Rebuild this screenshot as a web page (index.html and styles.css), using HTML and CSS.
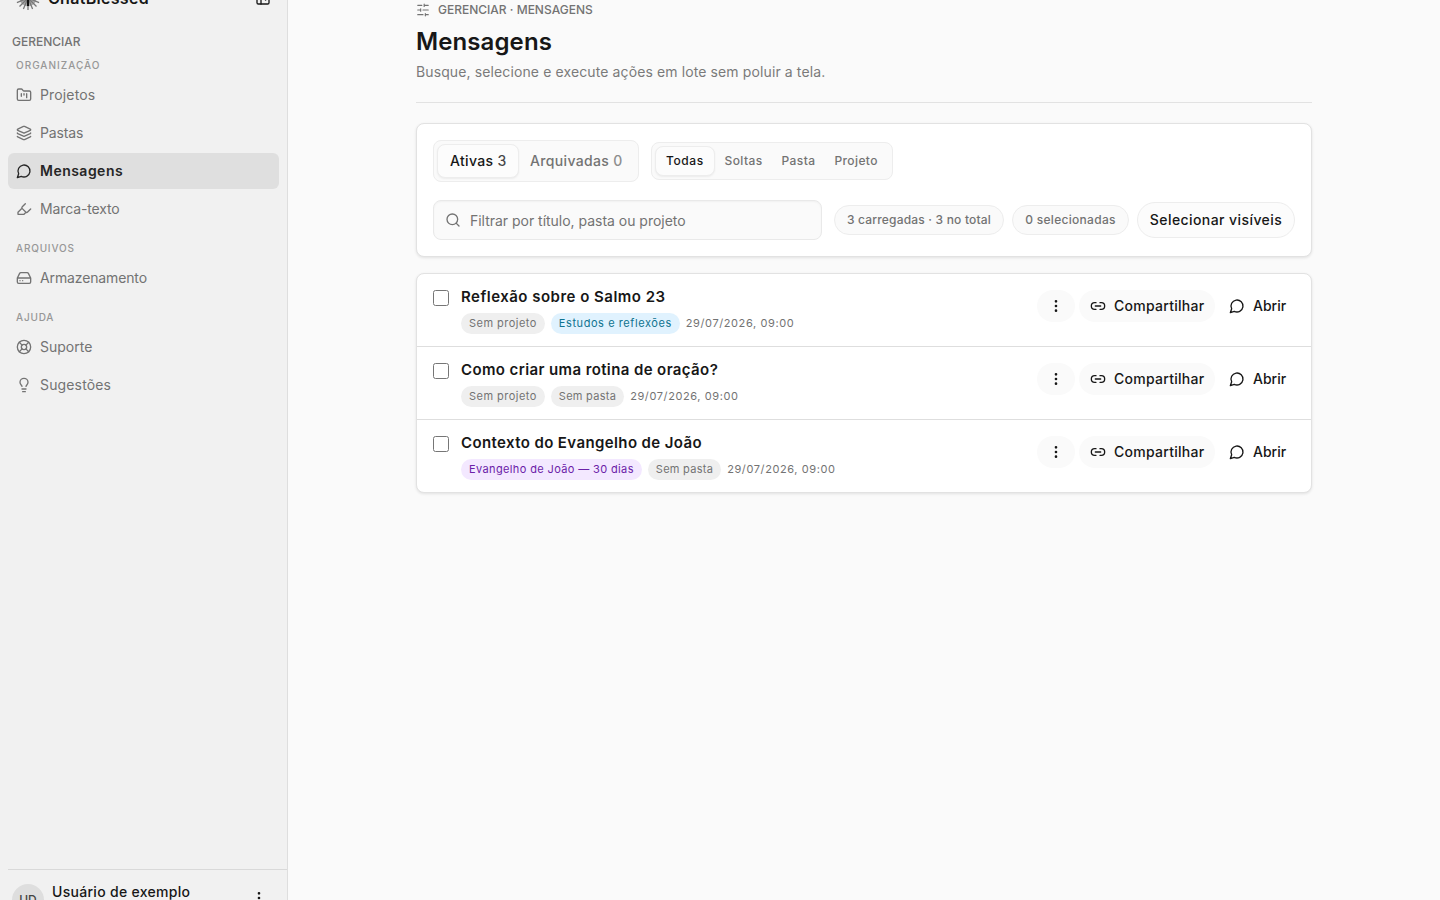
FILE: index.html
```html
<!DOCTYPE html>
<html lang="pt-BR">
<head>
<meta charset="utf-8">
<title>Mensagens</title>
<link rel="stylesheet" href="styles.css">
</head>
<body>
<svg class="sprite">
  <symbol id="chat" viewBox="0 0 24 24"><path d="M7.9 20A9 9 0 1 0 4 16.1L2 22Z"/></symbol>
  <symbol id="link" viewBox="0 0 24 24"><path d="M9 17H7A5 5 0 0 1 7 7h2M15 7h2a5 5 0 1 1 0 10h-2M8 12h8"/></symbol>
  <symbol id="dots" viewBox="0 0 24 24"><circle cx="12" cy="12" r="1"/><circle cx="12" cy="5" r="1"/><circle cx="12" cy="19" r="1"/></symbol>
</svg>
<div class="app">
  <aside class="sidebar">
    <div class="brand">
      <svg class="logo" viewBox="0 0 24 24"><circle class="halo" cx="12" cy="12" r="8.500"/><path d="M12 0v24M0 12h24M3.500 3.500l17 17M20.500 3.500l-17 17M7.400.900l9.200 22.200M16.600.900 7.400 23.100M.900 7.400l22.200 9.200M23.100 7.400.900 16.600"/><path class="cross" d="M12 3v17"/></svg>
      <span class="brand-name">ChatBlessed</span>
      <svg class="icon" viewBox="0 0 24 24"><rect width="18" height="18" x="3" y="3" rx="2"/><path d="M9 3v18M16 15l-3-3 3-3"/></svg>
    </div>
    <div class="side-title">GERENCIAR</div>
    <nav class="nav">
      <div class="group-title">ORGANIZAÇÃO</div>
      <a class="item"><svg class="icon" viewBox="0 0 24 24"><path d="M4 20h16a2 2 0 0 0 2-2V8a2 2 0 0 0-2-2h-7.930a2 2 0 0 1-1.660-.9l-.82-1.200A2 2 0 0 0 7.930 3H4a2 2 0 0 0-2 2v13c0 1.100.9 2 2 2ZM8 10v4M12 10v2M16 10v6"/></svg><span class="wide">Projetos</span></a>
      <a class="item"><svg class="icon" viewBox="0 0 24 24"><path d="M12.830 2.180a2 2 0 0 0-1.660 0L2.600 6.080a1 1 0 0 0 0 1.830l8.580 3.910a2 2 0 0 0 1.660 0l8.580-3.900a1 1 0 0 0 0-1.830ZM2 12a1 1 0 0 0 .58.910l8.600 3.910a2 2 0 0 0 1.650 0l8.580-3.900A1 1 0 0 0 22 12M2 17a1 1 0 0 0 .58.910l8.600 3.910a2 2 0 0 0 1.650 0l8.580-3.900A1 1 0 0 0 22 17"/></svg><span class="narrow">Pastas</span></a>
      <a class="item active"><svg class="icon"><use href="#chat"/></svg>Mensagens</a>
      <a class="item"><svg class="icon" viewBox="0 0 24 24"><path d="m9 11-6 6v3h9l3-3M22 12l-4.600 4.600a2 2 0 0 1-2.800 0l-5.200-5.200a2 2 0 0 1 0-2.800L14 4"/></svg><span class="narrow">Marca-texto</span></a>
      <div class="group-title later">ARQUIVOS</div>
      <a class="item"><svg class="icon" viewBox="0 0 24 24"><path d="M22 12H2M5.450 5.110 2 12v6a2 2 0 0 0 2 2h16a2 2 0 0 0 2-2v-6l-3.450-6.890A2 2 0 0 0 16.760 4H7.240a2 2 0 0 0-1.790 1.110ZM6 16h.01M10 16h.01"/></svg><span class="narrow">Armazenamento</span></a>
      <div class="group-title later">AJUDA</div>
      <a class="item"><svg class="icon" viewBox="0 0 24 24"><circle cx="12" cy="12" r="10"/><path d="m4.930 4.930 4.240 4.240M14.830 9.170l4.240-4.240M14.830 14.830l4.240 4.240M9.170 14.830l-4.240 4.240"/><circle cx="12" cy="12" r="4"/></svg>Suporte</a>
      <a class="item"><svg class="icon" viewBox="0 0 24 24"><path d="M15 14c.2-1 .7-1.700 1.500-2.500 1-.9 1.500-2.200 1.500-3.500A6 6 0 0 0 6 8c0 1 .2 2.200 1.500 3.500.7.7 1.300 1.500 1.500 2.500M9 18h6M10 22h4"/></svg><span class="wide">Sugestões</span></a>
    </nav>
    <div class="user">
      <span class="avatar">UD</span>
      <span class="user-name">Usuário de exemplo</span>
      <svg class="icon user-dots"><use href="#dots"/></svg>
    </div>
  </aside>
  <main class="main">
    <header class="head">
      <div class="crumb"><svg class="icon small" viewBox="0 0 24 24"><path d="M21 4h-7M10 4H3M21 12h-9M8 12H3M21 20h-5M12 20H3M14 2v4M8 10v4M16 18v4"/></svg>GERENCIAR · MENSAGENS</div>
      <h1 class="title">Mensagens</h1>
      <p class="lead">Busque, selecione e execute ações em lote sem poluir a tela.</p>
    </header>
    <section class="card filters">
      <div class="row tabs-row">
        <div class="tabs status"><span class="tab on">Ativas <i>3</i></span><span class="tab">Arquivadas <i>0</i></span></div>
        <div class="tabs scope"><span class="tab on">Todas</span><span class="tab">Soltas</span><span class="tab">Pasta</span><span class="tab">Projeto</span></div>
      </div>
      <div class="row search-row">
        <label class="search"><svg class="icon" viewBox="0 0 24 24"><circle cx="11" cy="11" r="8"/><path d="m21 21-4.300-4.300"/></svg><span class="placeholder">Filtrar por título, pasta ou projeto</span></label>
        <span class="pill total">3 carregadas · 3 no total</span>
        <span class="pill selected">0 selecionadas</span>
        <button class="select-all">Selecionar visíveis</button>
      </div>
    </section>
    <section class="card list">
      <article class="message">
        <input class="check" type="checkbox">
        <div class="info"><h2 class="name airy">Reflexão sobre o Salmo 23</h2>
          <div class="meta"><span class="tag">Sem projeto</span><span class="tag blue">Estudos e reflexões</span><time class="date">29/07/2026, 09:00</time></div></div>
        <div class="actions"><button class="btn more"><svg class="icon"><use href="#dots"/></svg></button><button class="btn share"><svg class="icon"><use href="#link"/></svg>Compartilhar</button><button class="btn open"><svg class="icon"><use href="#chat"/></svg>Abrir</button></div>
      </article>
      <article class="message">
        <input class="check" type="checkbox">
        <div class="info"><h2 class="name">Como criar uma rotina de oração?</h2>
          <div class="meta"><span class="tag">Sem projeto</span><span class="tag folder">Sem pasta</span><time class="date">29/07/2026, 09:00</time></div></div>
        <div class="actions"><button class="btn more"><svg class="icon"><use href="#dots"/></svg></button><button class="btn share"><svg class="icon"><use href="#link"/></svg>Compartilhar</button><button class="btn open"><svg class="icon"><use href="#chat"/></svg>Abrir</button></div>
      </article>
      <article class="message">
        <input class="check" type="checkbox">
        <div class="info"><h2 class="name">Contexto do Evangelho de João</h2>
          <div class="meta"><span class="tag purple">Evangelho de João — 30 dias</span><span class="tag folder">Sem pasta</span><time class="date">29/07/2026, 09:00</time></div></div>
        <div class="actions"><button class="btn more"><svg class="icon"><use href="#dots"/></svg></button><button class="btn share"><svg class="icon"><use href="#link"/></svg>Compartilhar</button><button class="btn open"><svg class="icon"><use href="#chat"/></svg>Abrir</button></div>
      </article>
    </section>
  </main>
</div>
</body>
</html>
```
FILE: styles.css
```css
* { box-sizing: border-box; }
body { margin: 0; overflow: hidden; background: #fafafa; color: #171717; font: 14px/20px Inter, sans-serif; }
button { font: inherit; color: inherit; border: 0; margin: 0; padding: 0; }
.sprite { display: none; }
.icon { width: 16px; height: 16px; flex: none; fill: none; stroke: currentColor; stroke-width: 2; stroke-linecap: round; stroke-linejoin: round; }
.icon.small { width: 14px; height: 14px; }
.app { display: flex; height: 900px; overflow: hidden; }

.sidebar { width: 288px; flex: none; display: flex; flex-direction: column; background: #f1f1f1; border-right: 1px solid #dedede; }
.brand { display: flex; align-items: center; height: 28px; margin-top: -16px; padding: 0 16px; flex: none; }
.logo { width: 24px; height: 24px; fill: none; stroke: #777; stroke-width: 1.3; }
.logo .halo { fill: #aaa; stroke: none; }
.logo .cross { stroke: #111; stroke-width: 2; }
.brand-name { flex: 1; margin-left: 8px; font-size: 16px; font-weight: 600; line-height: 24px; letter-spacing: .3px; }
.side-title { margin: 22px 12px 0; line-height: 16px; font-size: 12px; font-weight: 500; color: #737373; }
.nav { flex: 1; padding: 8px 8px 0; }
.group-title { padding: 0 8px; height: 15px; line-height: 15px; margin-bottom: 4px; font-size: 10px; font-weight: 500; letter-spacing: 1px; color: #979797; }
.group-title.later { margin-top: 14px; letter-spacing: .8px; }
.item { display: flex; align-items: center; gap: 8px; height: 36px; padding: 0 8px; margin-bottom: 2px; border-radius: 6px; color: #737373; }
.item.active { background: #dfdfdf; color: #262626; font-weight: 600; letter-spacing: .48px; }
.wide { letter-spacing: .15px; }
.narrow { letter-spacing: -.13px; }
.user { display: flex; align-items: flex-start; flex: none; height: 31px; margin-left: 8px; padding: 12px 20px 0 4px; border-top: 1px solid #d9d9d9; overflow: hidden; }
.avatar { width: 32px; height: 32px; margin-top: 2px; border-radius: 50%; background: #dedede; font-size: 12px; line-height: 32px; text-align: center; font-weight: 500; color: #444; }
.user-name { flex: 1; margin-left: 8px; font-weight: 500; letter-spacing: .3px; }
.user-dots { margin-top: 8px; }

.main { width: 896px; margin: 0 auto; }
.head { height: 103px; border-bottom: 1px solid #e2e2e2; }
.crumb { display: flex; align-items: center; gap: 8px; height: 20px; font-size: 12px; font-weight: 500; color: #737373; }
.title { margin: 6px 0 0; font-size: 24px; line-height: 32px; font-weight: 600; letter-spacing: .1px; }
.lead { margin: 4px 0 0; color: #7a7a7a; letter-spacing: .115px; }
.card { background: #fff; border: 1px solid #e2e2e2; border-radius: 8px; box-shadow: 0 1px 3px rgba(0,0,0,.1); }
.row { display: flex; align-items: center; }
.filters { height: 134px; margin-top: 20px; padding: 16px; }
.tabs-row { gap: 12px; height: 42px; }
.tabs { display: flex; align-items: center; background: #fafafa; border: 1px solid #ededed; border-radius: 8px; font-weight: 500; color: #737373; }
.tab { border: 1px solid transparent; border-radius: 8px; }
.tab i { font-style: normal; opacity: .8; }
.tab.on { background: #fcfcfc; border-color: #ededed; color: #171717; box-shadow: 0 1px 2px rgba(0,0,0,.06); }
.status { width: 206px; height: 42px; padding: 0 3px; letter-spacing: .35px; }
.status .tab { height: 34px; line-height: 32px; padding: 0 11px 0 10px; }
.status .tab.on { width: 82px; padding: 0 0 0 12px; }
.scope { width: 242px; height: 38px; padding: 0 3px; font-size: 12px; letter-spacing: .4px; }
.scope .tab { height: 30px; line-height: 28px; padding: 0 8.500px; }
.scope .tab.on { width: 60px; padding: 0 0 0 10px; letter-spacing: .6px; }
.search-row { margin-top: 18px; height: 40px; }
.search { display: flex; align-items: center; gap: 9px; width: 389px; height: 40px; padding-left: 11px; background: #fafafa; border: 1px solid #e9e9e9; border-radius: 8px; color: #737373; box-shadow: inset 0 1px 2px rgba(0,0,0,.04); }
.placeholder { padding-top: 2px; letter-spacing: -.02px; }
.pill { height: 30px; line-height: 28px; text-align: center; background: #fafafa; border: 1px solid #ededed; border-radius: 15px; font-size: 12px; font-weight: 500; color: #737373; }
.total { width: 170px; margin-left: 12px; letter-spacing: .19px; }
.selected { width: 117px; margin-left: 8px; letter-spacing: .3px; }
.select-all { width: 158px; height: 36px; margin-left: 8px; border: 1px solid #ededed; border-radius: 18px; background: #fcfcfc; font-weight: 500; letter-spacing: .42px; }

.list { height: 220px; margin-top: 16px; }
.message { display: flex; align-items: flex-start; height: 73px; padding: 12px 16px 0; border-bottom: 1px solid #dedede; }
.message:last-child { border-bottom: 0; }
.check { appearance: none; width: 16px; height: 16px; margin: 4px 12px 0 0; border: 1px solid #767676; border-radius: 2.5px; background: #fff; }
.info { flex: 1; }
.name { margin: 0; font-size: 15px; line-height: 22px; font-weight: 600; letter-spacing: .39px; }
.name.airy { letter-spacing: .49px; }
.meta { display: flex; align-items: center; gap: 6px; height: 21px; margin-top: 5px; font-size: 11px; line-height: 21px; color: #737373; }
.tag { padding: 0 8px; border-radius: 11px; background: #efefef; letter-spacing: .47px; }
.tag.folder { letter-spacing: .27px; }
.tag.blue { background: #e0f2fe; color: #0f7490; letter-spacing: .57px; }
.tag.purple { background: #f3e8ff; color: #6b21a8; letter-spacing: .37px; }
.date { letter-spacing: .6px; }
.actions { display: flex; gap: 4px; margin-top: 4px; }
.btn { display: flex; align-items: center; gap: 8px; height: 32px; border-radius: 16px; font-weight: 500; background: #fafafa; }
.more { width: 38px; justify-content: center; }
.share { width: 136px; padding-left: 11px; letter-spacing: .27px; }
.open { width: 76px; padding-left: 10px; background: transparent; }
```
